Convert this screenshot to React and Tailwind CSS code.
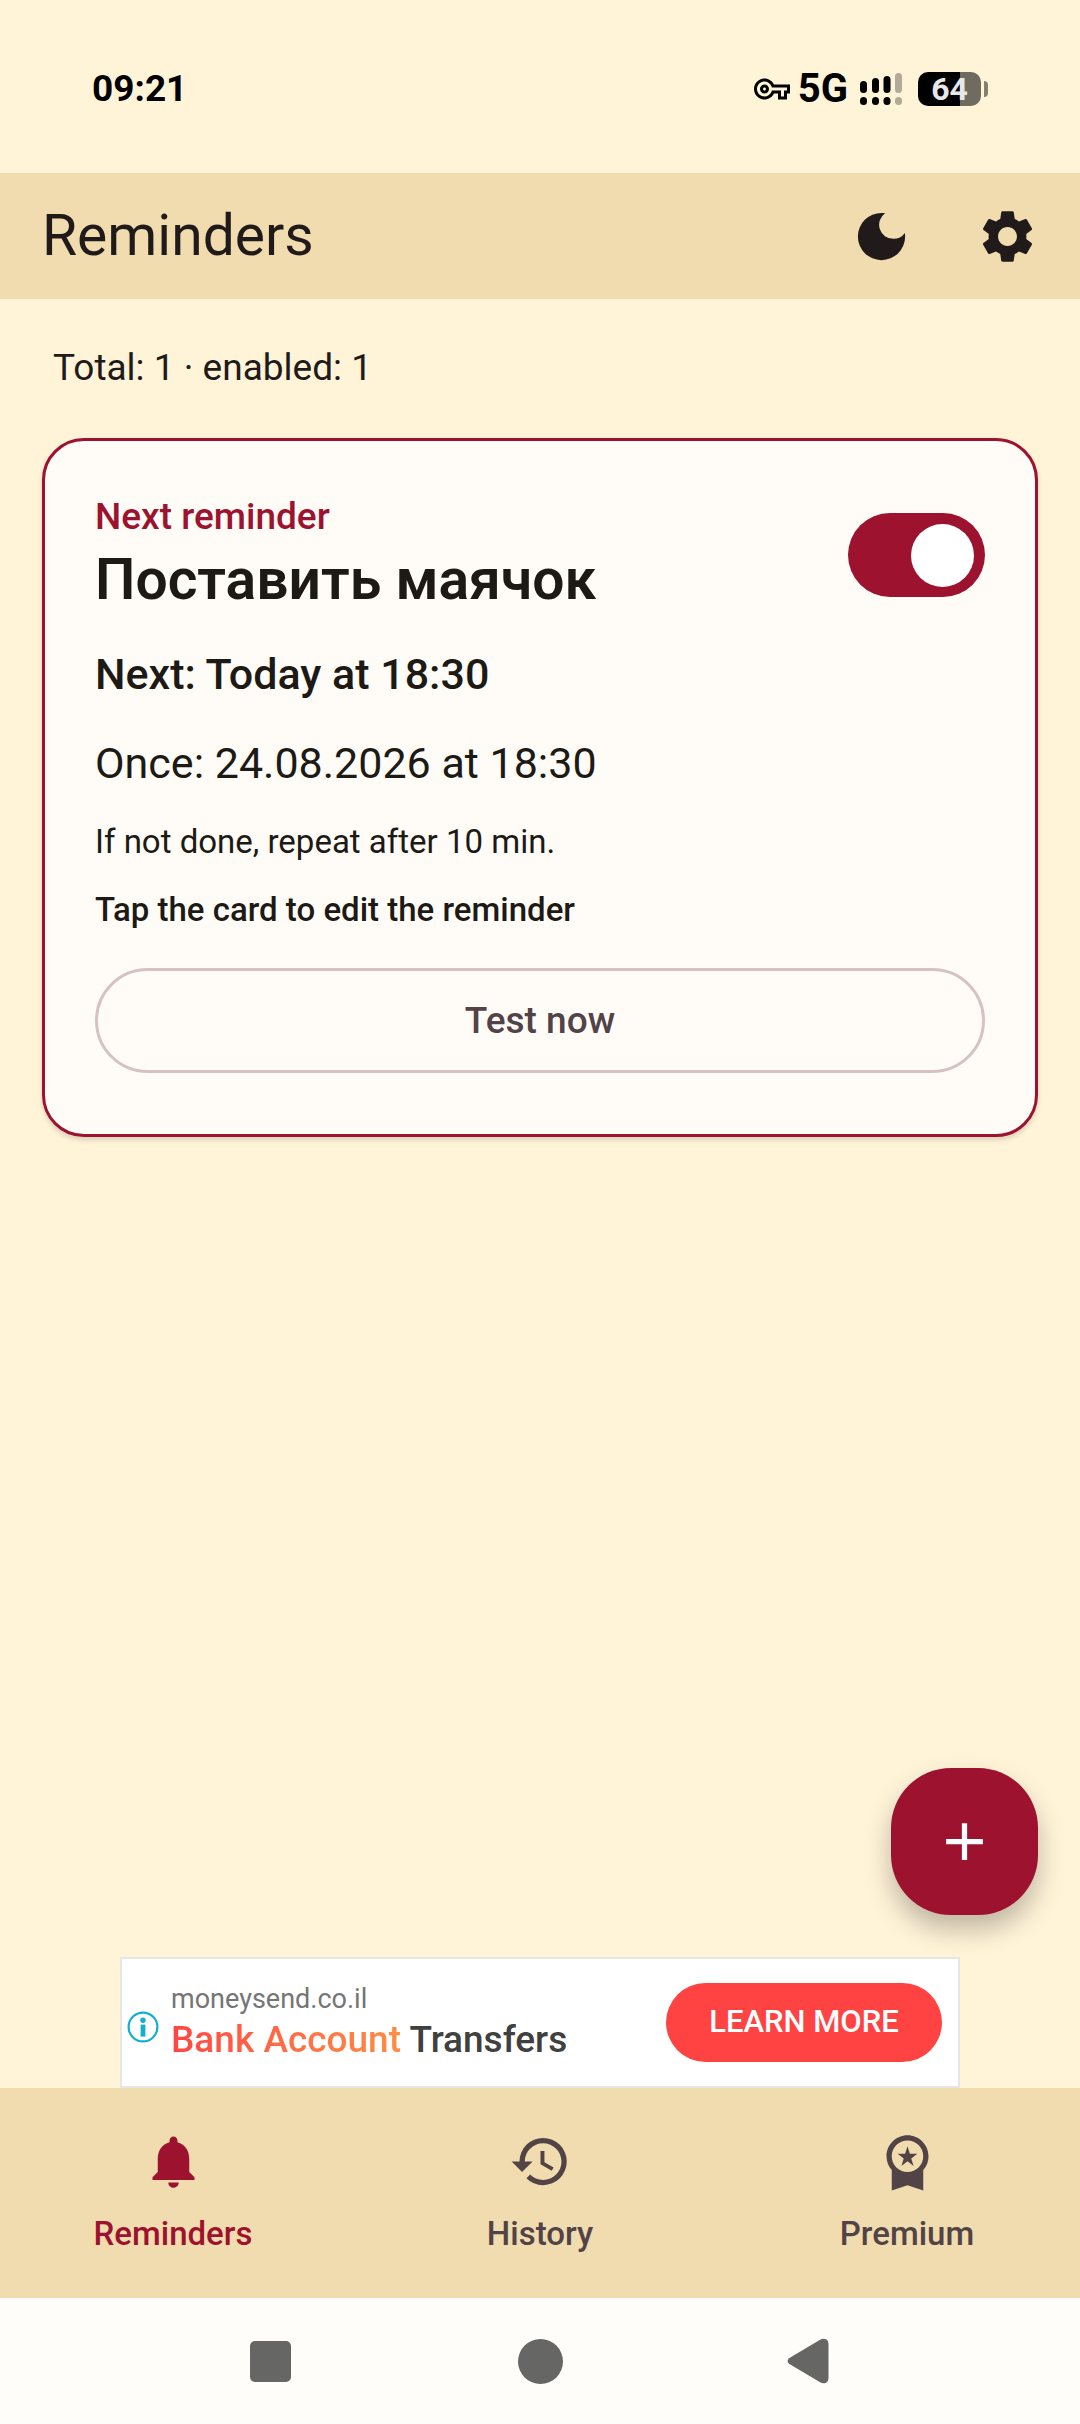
import { useState } from 'react'
import {
  MdAdd,
  MdDarkMode,
  MdHistory,
  MdNotifications,
  MdOutlineVpnKey,
  MdSettings,
  MdWorkspacePremium,
} from 'react-icons/md'

const tabs = [
  { id: 'reminders', label: 'Reminders', icon: MdNotifications },
  { id: 'history', label: 'History', icon: MdHistory },
  { id: 'premium', label: 'Premium', icon: MdWorkspacePremium },
]

const SignalIcon = () => (
  <svg className="w-[42px] h-8" viewBox="0 0 42 32" aria-hidden="true">
    <g fill="#000">
      <rect x="0" y="8" width="7" height="12" rx="3.5" />
      <rect x="0" y="24" width="7" height="8" rx="3.5" />
      <rect x="12" y="5" width="7" height="15" rx="3.5" />
      <rect x="12" y="24" width="7" height="8" rx="3.5" />
      <rect x="23.5" y="3" width="7" height="17" rx="3.5" />
      <rect x="23.5" y="24" width="7" height="8" rx="3.5" />
    </g>
    <g fill="#b3a997">
      <rect x="35" y="0" width="7" height="20" rx="3.5" />
      <rect x="35" y="24" width="7" height="8" rx="3.5" />
    </g>
  </svg>
)

const StatusBar = () => (
  <div className="flex items-center justify-between h-[173px] px-[92px] pt-1 text-black">
    <span className="text-[37px] font-bold">09:21</span>
    <div className="flex items-center">
      <MdOutlineVpnKey className="w-9 h-9 mr-2" />
      <span className="mr-3 text-[40px] leading-none font-bold">5G</span>
      <SignalIcon />
      <div className="flex items-center gap-[3px] ml-4">
        <div className="flex items-center justify-center w-[63px] h-[34px] rounded-[10px] bg-linear-to-r from-black from-67% to-[#6f6b60] to-67%">
          <span className="text-[32px] leading-none font-bold text-[#e8e8ea]">64</span>
        </div>
        <div className="w-1 h-4 rounded-r-sm bg-[#857f72]" />
      </div>
    </div>
  </div>
)

const Header = () => (
  <header className="flex items-center justify-between h-[126px] pl-[42px] pr-[10px] bg-[#f0dcae]">
    <h1 className="text-[57px] leading-[74px]">Reminders</h1>
    <div className="flex items-center">
      <button className="flex items-center justify-center size-[126px]" aria-label="Dark theme">
        <MdDarkMode className="size-[63px]" />
      </button>
      <button className="flex items-center justify-center size-[126px]" aria-label="Settings">
        <MdSettings className="size-[63px]" />
      </button>
    </div>
  </header>
)

const ReminderCard = () => {
  const [enabled, setEnabled] = useState(true)

  return (
    <article className="flex flex-col gap-[26px] p-[50px] rounded-[42px] border-3 border-[#9c122f] bg-[#fffcf7] text-[#1d1a16] shadow-[0_3px_5px_rgba(0,0,0,0.15)]">
      <div className="flex items-start justify-between">
        <div>
          <p className="text-[37px] leading-[52px] font-medium text-[#9c122f]">Next reminder</p>
          <h2 className="text-[57px] leading-[74px] font-semibold">Поставить маячок</h2>
        </div>
        <input
          type="checkbox"
          role="switch"
          aria-label="Reminder enabled"
          checked={enabled}
          onChange={(e) => setEnabled(e.target.checked)}
          className="mt-[22px] w-[137px] h-[84px] appearance-none flex items-center px-[11px] rounded-full bg-[#d6c2c4] checked:bg-[#9c122f] checked:justify-end before:size-[63px] before:rounded-full before:bg-white"
        />
      </div>
      <p className="text-[43px] leading-[63px] font-medium">Next: Today at 18:30</p>
      <p className="text-[43px] leading-[63px]">Once: 24.08.2026 at 18:30</p>
      <p className="text-[33px] leading-[42px]">If not done, repeat after 10 min.</p>
      <p className="text-[33px] leading-[42px] font-medium">Tap the card to edit the reminder</p>
      <button className="my-[11px] h-[105px] rounded-full border-3 border-[#d6c2c4] text-[37px] font-medium text-[#514347]">
        Test now
      </button>
    </article>
  )
}

const AdBanner = () => (
  <aside className="w-full max-w-[840px] h-[131px] mx-auto flex items-center pl-[5px] pr-4 border-2 border-[#e6e6e6] bg-white">
    <svg className="size-8 mt-2 shrink-0" viewBox="0 0 32 32" aria-hidden="true">
      <circle cx="16" cy="16" r="14.4" fill="none" stroke="#14afd0" strokeWidth="2.2" />
      <circle cx="16" cy="9.2" r="2.7" fill="#14afd0" />
      <path d="M13.6 13.6h4.8v12h-4.8z" fill="#14afd0" />
    </svg>
    <div className="ml-3 pb-1 flex-1">
      <p className="text-[27px] leading-[38px] text-[#757575]">moneysend.co.il</p>
      <p className="text-[37px] leading-[44px] font-medium text-[#404040]">
        <span className="bg-linear-to-r from-[#ff4444] to-[#ff8c44] bg-clip-text text-transparent">
          Bank Account
        </span>{' '}
        Transfers
      </p>
    </div>
    <a
      href="#learn-more"
      className="flex items-center justify-center w-[276px] h-[79px] rounded-full bg-[#ff4342] text-[31px] font-medium text-white"
    >
      LEARN MORE
    </a>
  </aside>
)

const TabBar = () => {
  const [active, setActive] = useState('reminders')

  return (
    <nav className="grid grid-cols-3 gap-[21px] bg-[#f0dcae]">
      {tabs.map(({ id, label, icon: Icon }) => (
        <button
          key={id}
          onClick={() => setActive(id)}
          className={`flex flex-col items-center gap-5 pt-[42px] pb-[43px] ${
            active === id ? 'text-[#9c122f]' : 'text-[#524347]'
          }`}
        >
          <Icon className="size-[63px]" />
          <span className="text-[33px] leading-[42px] font-medium">{label}</span>
        </button>
      ))}
    </nav>
  )
}

const SystemNav = () => (
  <div className="grid grid-cols-3 h-[126px] px-[12.5%] bg-[#fffdf9] text-[#666664]">
    <button className="flex items-center justify-center" aria-label="Recent apps">
      <span className="size-[41px] rounded-[5px] bg-current" />
    </button>
    <button className="flex items-center justify-center" aria-label="Home">
      <span className="size-[45px] rounded-full bg-current" />
    </button>
    <button className="flex items-center justify-center" aria-label="Back">
      <svg className="size-[46px]" viewBox="0 0 46 46" fill="currentColor" aria-hidden="true">
        <path d="M2 20.2 L33.5 1.4 Q36.5 -.2 39.5 1.6 Q41.5 3 41.5 6 V40 Q41.5 43 39.5 44.4 Q36.5 46.2 33.5 44.6 L2 25.8 Q-.8 23 2 20.2Z" />
      </svg>
    </button>
  </div>
)

const App = () => {
  return (
    <div className="min-h-screen flex flex-col bg-[#fff3d8] font-[Roboto,sans-serif] text-[#211a1b]">
      <StatusBar />
      <Header />
      <main className="relative flex-1 px-[42px] pt-[43px]">
        <p className="px-[11px] mb-11 text-[37px] leading-[52px]">Total: 1 · enabled: 1</p>
        <ReminderCard />
        {/* Add reminder */}
        <button
          className="absolute right-[42px] bottom-[42px] flex items-center justify-center size-[147px] rounded-[60px] bg-[#9c122f] text-white shadow-[0_14px_26px_rgba(0,0,0,0.25)]"
          aria-label="Add reminder"
        >
          <MdAdd className="size-[63px]" />
        </button>
      </main>
      <AdBanner />
      <TabBar />
      <SystemNav />
    </div>
  )
}

export default App
